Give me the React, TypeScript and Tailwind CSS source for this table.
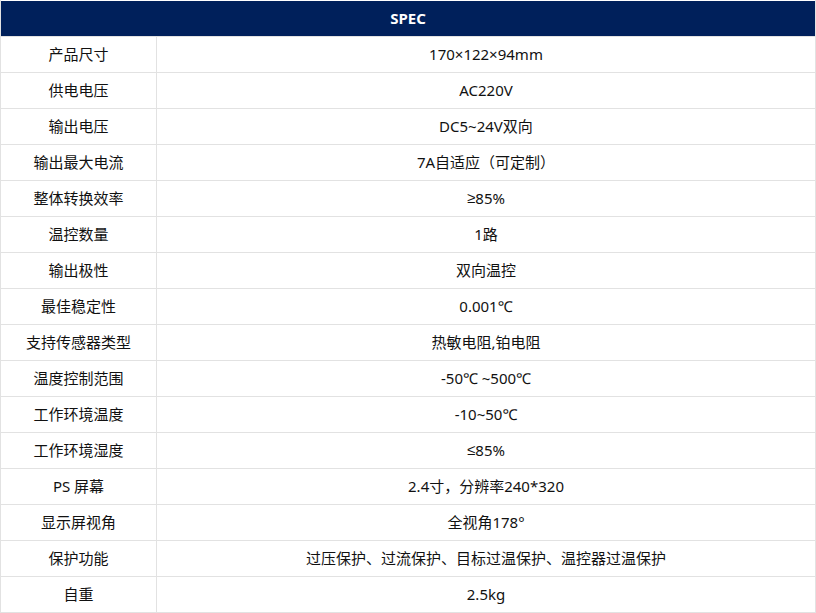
import React from "react";

const Sym = ({ c }: { c: string }) => (
  <span style={{ fontFamily: '"Liberation Sans", "DejaVu Sans", sans-serif' }}>{c}</span>
);

const rows: [string, React.ReactNode][] = [
  ["产品尺寸", "170×122×94mm"],
  ["供电电压", "AC220V"],
  ["输出电压", "DC5~24V双向"],
  ["输出最大电流", "7A自适应（可定制）"],
  ["整体转换效率", <><Sym c="≥" />85%</>],
  ["温控数量", "1路"],
  ["输出极性", "双向温控"],
  ["最佳稳定性", "0.001℃"],
  ["支持传感器类型", "热敏电阻,铂电阻"],
  ["温度控制范围", "-50℃ ~500℃"],
  ["工作环境温度", "-10~50℃"],
  ["工作环境湿度", <><Sym c="≤" />85%</>],
  ["PS 屏幕", "2.4寸，分辨率240*320"],
  ["显示屏视角", "全视角178°"],
  ["保护功能", "过压保护、过流保护、目标过温保护、温控器过温保护"],
  ["自重", "2.5kg"],
];

export default function App() {
  return (
    <div
      className="w-[816px] h-[613px] bg-white text-[15px] text-[#111]"
      style={{ fontFamily: '"Noto Sans", "Noto Sans CJK SC", sans-serif' }}
    >
      <div className="border-l border-r border-b border-[#e2e2e2]">
        <div className="h-[36px] border-t border-white bg-[#00205b] flex items-center justify-center text-white font-bold text-[15px]">
          SPEC
        </div>
        {rows.map(([k, v]) => (
          <div key={k} className="flex h-[36px] border-t border-[#e2e2e2]">
            <div className="w-[155px] flex items-center justify-center">{k}</div>
            <div className="flex-1 flex items-center justify-center border-l border-[#e2e2e2]">{v}</div>
          </div>
        ))}
      </div>
    </div>
  );
}
